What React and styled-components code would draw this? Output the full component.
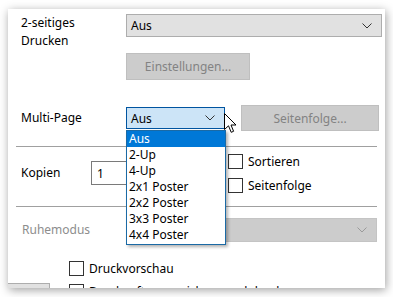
import React from "react";
import styled, { createGlobalStyle } from "styled-components";

const Global = createGlobalStyle`
  html, body { margin: 0; padding: 0; background: #ffffff; }
  body { width: 393px; height: 297px; overflow: hidden; }
  * { box-sizing: border-box; }
`;

const Page = styled.div`
  padding: 9px 8px 0 8px;
  font-family: "Noto Sans", "Liberation Sans", sans-serif;
  font-size: 12px;
  color: #000;
`;

const Window = styled.div`
  position: relative;
  width: 377px;
  height: 279px;
  background: #fff;
  overflow: hidden;
  box-shadow: 1px 2px 9px rgba(0, 0, 0, 0.38);
`;

const Content = styled.div`
  display: flex;
  flex-direction: column;
`;

const Row = styled.div`
  display: flex;
  align-items: ${(p) => p.$align || "center"};
  padding-left: ${(p) => p.$pl ?? 13}px;
  padding-top: ${(p) => p.$pt || 0}px;
`;

const Label = styled.div`
  width: ${(p) => p.$w || 105}px;
  flex: none;
  line-height: 18px;
  color: ${(p) => (p.$disabled ? "#8d8d8d" : "#000")};
  padding-left: ${(p) => p.$pl || 0}px;
`;

const Select = styled.div`
  display: flex;
  align-items: center;
  justify-content: space-between;
  width: ${(p) => p.$w}px;
  height: ${(p) => p.$h}px;
  padding: 0 9px 0 4px;
  background: ${(p) => (p.$focus ? "#cce4f7" : p.$disabled ? "#cccccc" : "#e1e1e1")};
  border: 1px solid ${(p) => (p.$focus ? "#0054a0" : p.$disabled ? "#c4c4c4" : "#adadad")};
  color: #000;
  flex: none;
`;

const Button = styled.div`
  display: flex;
  align-items: center;
  justify-content: center;
  width: ${(p) => p.$w}px;
  height: ${(p) => p.$h}px;
  margin-left: ${(p) => p.$ml || 0}px;
  background: #cccccc;
  border: 1px solid #bfbfbf;
  color: #838383;
  flex: none;
`;

const Separator = styled.div`
  height: 1px;
  background: #a0a0a0;
  margin: ${(p) => p.$mt}px 8px 0 8px;
`;

const Input = styled.div`
  width: 60px;
  height: 24px;
  border: 1px solid #7a7a7a;
  padding-left: 5px;
  display: flex;
  align-items: center;
  flex: none;
`;

const CheckCol = styled.div`
  display: flex;
  flex-direction: column;
  gap: 8px;
  margin-left: ${(p) => p.$ml || 0}px;
`;

const Check = styled.div`
  display: flex;
  align-items: center;
  gap: 5px;
  height: 16px;
  margin-left: ${(p) => p.$ml || 0}px;
  white-space: nowrap;
`;

const Box = styled.span`
  width: 15px;
  height: 15px;
  border: 1px solid #333;
  background: #fff;
  flex: none;
`;

const Stub = styled.div`
  width: 42px;
  height: 14px;
  background: #e1e1e1;
  border: 1px solid #adadad;
  border-left: none;
  flex: none;
`;

const DropList = styled.ul`
  position: absolute;
  left: 118px;
  top: 121px;
  width: 100px;
  margin: 0;
  padding: 0 0 1px 0;
  list-style: none;
  background: #fff;
  border: 1px solid #1b6aa5;
  box-shadow: 2px 2px 3px rgba(0, 0, 0, 0.3);
  z-index: 2;
`;

const Item = styled.li`
  height: 16px;
  line-height: 16px;
  padding-left: 2px;
  background: ${(p) => (p.$sel ? "#0078d7" : "transparent")};
  color: ${(p) => (p.$sel ? "#fff" : "#000")};
`;

const Cursor = styled.svg`
  position: absolute;
  left: 216px;
  top: 104px;
  z-index: 3;
`;

const Chevron = ({ color = "#333" }) => (
  <svg width="10" height="6" viewBox="0 0 10 6">
    <polyline points="0.5,0.5 5,5 9.5,0.5" fill="none" stroke={color} strokeWidth="1" />
  </svg>
);

const items = ["Aus", "2-Up", "4-Up", "2x1 Poster", "2x2 Poster", "3x3 Poster", "4x4 Poster"];

export default function App() {
  return (
    <>
      <Global />
      <Page>
        <Window>
          <Content>
            <Row $align="flex-start" $pt={5}>
              <Label>
                2-seitiges
                <br />
                Drucken
              </Label>
              <Select $w={256} $h={23}>
                Aus
                <Chevron />
              </Select>
            </Row>
            <Row $pl={118} $pt={3}>
              <Button $w={124} $h={27}>Einstellungen...</Button>
            </Row>
            <Row $pt={25}>
              <Label>Multi-Page</Label>
              <Select $w={99} $h={22} $focus>
                Aus
                <Chevron />
              </Select>
              <Button $w={138} $h={26} $ml={16}>Seitenfolge...</Button>
            </Row>
            <Separator $mt={15} />
            <Row $pt={6}>
              <Label $w={70}>Kopien</Label>
              <Input>1</Input>
              <CheckCol $ml={77}>
                <Check>
                  <Box />
                  Sortieren
                </Check>
                <Check>
                  <Box />
                  Seitenfolge
                </Check>
              </CheckCol>
            </Row>
            <Separator $mt={13} />
            <Row $pt={11}>
              <Label $pl={1} $disabled>Ruhemodus</Label>
              <Select $w={251} $h={24} $disabled>
                <span />
                <Chevron color="#9a9a9a" />
              </Select>
            </Row>
            <Row $pl={61} $pt={18}>
              <Check>
                <Box />
                Druckvorschau
              </Check>
            </Row>
            <Row $pl={0} $pt={7} $align="flex-start">
              <Stub />
              <Check $ml={19}>
                <Box />
                Druckauftrag speichern und drucken
              </Check>
            </Row>
          </Content>
          <DropList>
            {items.map((t, i) => (
              <Item key={t} $sel={i === 0}>
                {t}
              </Item>
            ))}
          </DropList>
          <Cursor width="13" height="21" viewBox="0 0 13 21">
            <path
              d="M0.5,0.5 L0.5,16.5 L4.5,12.8 L7.2,19.3 L9.6,18.3 L7,12 L12,12 Z"
              fill="#fff"
              stroke="#000"
              strokeWidth="1"
              strokeLinejoin="miter"
            />
          </Cursor>
        </Window>
      </Page>
    </>
  );
}
